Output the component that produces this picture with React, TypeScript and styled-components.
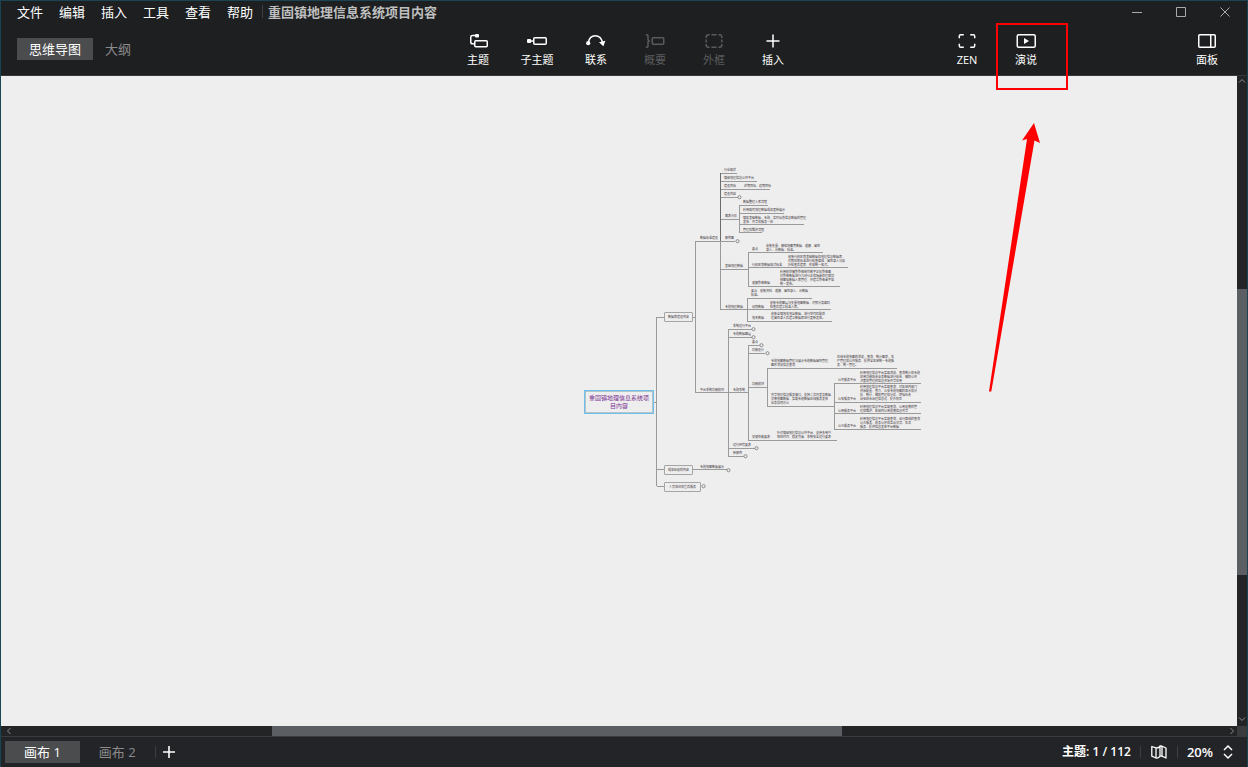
import React from "react";
import styled, { createGlobalStyle } from "styled-components";

const GlobalStyle = createGlobalStyle`
  *, *::before, *::after { box-sizing: border-box; }
  body { margin: 0; background: #1e1f21; }
  body, button {
    font-family: "Open Sans", "Noto Sans CJK SC", sans-serif;
    font-size: 13px;
    line-height: 20px;
  }
  button { margin: 0; padding: 0; border: 0; background: none; color: inherit; }
`;

const Window = styled.div`
  display: flex;
  flex-direction: column;
  height: 100vh;
  border: 1px solid #1b4452;
  border-bottom: 0;
  background: #1e1f21;
  color: #fff;
  overflow: hidden;
`;

const TitleBar = styled.header`
  display: flex;
  align-items: center;
  flex: none;
  height: 23px;
  padding: 0 0 2px 16px;
`;

const Menu = styled.nav`
  display: flex;
  gap: 16px;
`;

const MenuButton = styled.button`
  white-space: nowrap;
`;

const Divider = styled.span<{ $height: number }>`
  width: 1px;
  height: ${(p) => p.$height}px;
  background: #3d3e41;
`;

const TitleDivider = styled(Divider)`
  margin: 0 5px 0 9px;
`;

const DocumentTitle = styled.h1`
  margin: 0;
  font-size: 13px;
  font-weight: 700;
  color: #bfbfbf;
`;

const WindowControls = styled.div`
  display: flex;
  margin-left: auto;
`;

const WindowButton = styled.button`
  display: grid;
  place-items: center;
  width: 44px;
  height: 20px;
  color: #a9a9a9;
`;

const ToolBar = styled.div`
  display: grid;
  grid-template-columns: 1fr auto 1fr;
  flex: none;
  height: 52px;
  padding: 0 12px 0 16px;
  border-bottom: 1px solid #38383a;
`;

const ViewTabs = styled.div`
  display: flex;
  align-items: center;
  height: 50px;
`;

const Tab = styled.button<{ $active?: boolean; $pad: number }>`
  height: 22px;
  padding: 0 ${(p) => p.$pad}px;
  white-space: nowrap;
  color: ${(p) => (p.$active ? "#fff" : "#8b8b8b")};
  background: ${(p) => (p.$active ? "#4b4c4e" : "transparent")};
`;

const ToolGroup = styled.div<{ $end?: boolean }>`
  display: flex;
  justify-content: ${(p) => (p.$end ? "flex-end" : "center")};
`;

const ToolButton = styled.button<{ $width: number; $push?: number }>`
  display: flex;
  flex-direction: column;
  align-items: center;
  gap: 2px;
  width: ${(p) => p.$width}px;
  margin-left: ${(p) => p.$push ?? 0}px;
  padding: 8px ${(p) => p.$width % 2}px 0 0;
  font-size: 11px;
  line-height: 16px;
  color: #fff;
  &:disabled { color: #5a5b5d; }
`;

const Highlighted = styled.div`
  position: relative;
  &::after {
    content: "";
    position: absolute;
    top: -1px;
    left: 0;
    width: 72px;
    height: 67px;
    border: 2px solid #f00;
    z-index: 2;
    pointer-events: none;
  }
`;

const Workspace = styled.div`
  display: grid;
  grid-template-columns: 1fr 10px;
  grid-template-rows: 1fr 10px;
  flex: 1;
  min-height: 0;
`;

const Canvas = styled.main`
  position: relative;
  overflow: hidden;
  background: #eeeeee;
`;

const Wires = styled.svg`
  position: absolute;
  top: 0;
  left: 0;
`;

const Topic = styled.div`
  position: absolute;
  font-size: 3px;
  line-height: 4px;
  white-space: pre;
  color: #40353a;
`;

const BoxedTopic = styled(Topic)`
  display: grid;
  place-items: center;
  height: 10px;
  border: 1px solid #a5a5a5;
  border-radius: 1px;
`;

const CentralTopic = styled(Topic)`
  display: grid;
  place-items: center;
  width: 70px;
  height: 24px;
  border: 1px solid #6fc0e8;
  box-shadow: inset 0 0 0 1px #b3c4cc;
  font-size: 6px;
  line-height: 8px;
  text-align: center;
  color: #7b3292;
`;

const VerticalScroll = styled.div`
  display: grid;
  grid-template-rows: 12px 201fr 286fr 139fr 12px;
  justify-items: center;
  background: #232426;
  color: #8b8c8f;
`;

const HorizontalScroll = styled.div`
  display: grid;
  grid-template-columns: 13px 258fr 570fr 382fr 13px;
  align-items: center;
  justify-items: center;
  background: #232426;
  color: #8b8c8f;
`;

const Thumb = styled.div<{ $vertical?: boolean }>`
  width: 100%;
  height: 100%;
  background: #5b5e63;
  ${(p) => (p.$vertical ? "grid-row: 3;" : "grid-column: 3;")}
`;

const ScrollArrow = styled.button<{ $row?: number; $column?: number }>`
  display: grid;
  place-items: center;
  width: 10px;
  height: 10px;
  grid-row: ${(p) => p.$row ?? "auto"};
  grid-column: ${(p) => p.$column ?? "auto"};
`;

const Corner = styled.div`
  background: #3a3b3d;
`;

const StatusBar = styled.footer`
  display: flex;
  align-items: center;
  flex: none;
  height: 31px;
  padding: 0 14px 0 4px;
  border-top: 1px solid #3a3b3d;
  background: #232427;
`;

const AddSheet = styled.button`
  display: grid;
  place-items: center;
  width: 26px;
  height: 22px;
`;

const Status = styled.div`
  display: flex;
  align-items: center;
  gap: 9px;
  margin-left: auto;
  font-weight: 600;
`;

const TopicCount = styled.span`
  font-size: 12px;
`;

const StatusButton = styled.button`
  display: grid;
  place-items: center;
`;

const Zoom = styled.div`
  display: flex;
  align-items: center;
  gap: 10px;
`;

const Icon = ({ children, w = 20, h = 18 }: { children: React.ReactNode; w?: number; h?: number }) => (
  <svg width={w} height={h} viewBox={`0 0 ${w} ${h}`} fill="none" stroke="currentColor" strokeWidth="1.5" aria-hidden="true">
    {children}
  </svg>
);

const tools = [
  {
    label: "主题",
    icon: (
      <>
        <rect x="6.75" y="8.75" width="12.5" height="6" rx="1" />
        <path d="M9 3.5H4.5Q2.75 3.5 2.75 5.2V10Q2.75 11.8 4.5 11.8H6.5" />
        <rect x="7" y="2" width="4" height="3.5" rx="1" fill="currentColor" stroke="none" />
      </>
    ),
  },
  {
    label: "子主题",
    icon: (
      <>
        <rect x="6.75" y="5.75" width="12.5" height="6.5" rx="1" />
        <path d="M2 9H6.5" />
        <rect x="0" y="7" width="4.2" height="4" rx="1" fill="currentColor" stroke="none" />
      </>
    ),
  },
  {
    label: "联系",
    icon: (
      <>
        <path d="M2.3 10.5C3.2 6 6 3.8 9.3 3.8C13 3.8 15.5 6.5 16.6 10.5" />
        <circle cx="2.2" cy="11.2" r="2.1" fill="currentColor" stroke="none" />
        <path d="M13 10.2L19.4 8.8L17.4 14.2Z" fill="currentColor" stroke="none" />
      </>
    ),
  },
  {
    label: "概要",
    disabled: true,
    icon: (
      <>
        <path d="M0.8 2.8H1.8Q3 2.8 3 4V7.3Q3 9 4.8 9Q3 9 3 10.7V14Q3 15.2 1.8 15.2H.8" />
        <rect x="7.25" y="5.75" width="11.5" height="6.5" rx="1" />
      </>
    ),
  },
  {
    label: "外框",
    disabled: true,
    icon: (
      <path d="M2.2 6V5Q2.2 2.8 4.4 2.8H5.6M7.5 2.8H12.5M14.4 2.8H15.6Q17.8 2.8 17.8 5V6M17.8 7.5V10.5M17.8 12V13Q17.8 15.2 15.6 15.2H14.4M12.5 15.2H7.5M5.6 15.2H4.4Q2.2 15.2 2.2 13V12M2.2 10.5V7.5" />
    ),
  },
  { label: "插入", icon: <path d="M10 2.5V15.5M3.5 9H16.5" /> },
];

// Topics of the map: left, top, lines of text.
const topics: [number, number, string][] = [
  [724, 168, "行业现状"],
  [724, 176, "镇级地理信息公共平台"],
  [724, 184, "建设目标"],
  [744, 184, "近期目标、远期目标"],
  [724, 192, "建设内容"],
  [725, 214, "需求分析"],
  [743, 200, "数据整理入库流程"],
  [743, 208, "利用现有地理数据成果更新展示"],
  [743, 216, "镇区基础数据、专题、实时动态信息数据的管理\n发布、共享和服务一体"],
  [743, 228, "管理和维护流程"],
  [725, 236, "架构图"],
  [700, 236, "数据标准建设"],
  [725, 264, "基础地理数据"],
  [752, 247, "要点"],
  [766, 244, "收集矢量、栅格地图等数据、遥感、属性\n录入、元数据、标准。"],
  [752, 263, "行政区划数据格式标准"],
  [788, 255, "收集行政区划基础数据和地理信息数据库、\n对照国家标准进行检查编辑、属性录入与拓\n扑检查后建库、形成统一格式。"],
  [752, 281, "遥感影像数据"],
  [780, 270, "利用航空摄影影像制作数字正射影像图\n对影像数据进行几何纠正和镶嵌处理裁切\n按图幅数据入库管理、并建立影像金字塔\n统一发布。"],
  [725, 305, "专题地理数据"],
  [751, 289, "要点、收集资料、遥感、属性录入、元数据\n标准。"],
  [752, 305, "规划数据"],
  [770, 301, "收集专题图层与矢量地图数据、对照分类编码\n检查后建立标准入库。"],
  [752, 316, "地名数据"],
  [771, 312, "收集全镇地名地址数据、进行空间匹配处\n理属性录入后建立数据库进行更新发布。"],
  [733, 324, "系统运行平台"],
  [733, 332, "专题数据图层"],
  [752, 340, "要点"],
  [752, 348, "功能设计"],
  [752, 382, "功能模块"],
  [771, 359, "专题地图数据管理与展示专题数据属性管理\n图形浏览信息查询"],
  [837, 355, "在线专题地图的浏览、查询、统计图表、生\n产管理和公共服务、提供全区域统一专题服\n务、统一管理。"],
  [771, 393, "共享地理信息服务接口、支持二次开发及数据\n交换地图数据、实现专题数据在线服务发布\n业务协同办公"],
  [838, 378, "公共服务平台"],
  [860, 371, "利用地理信息平台实现浏览、查询统计和专题\n应用功能结合业务数据进行综合、辅助公共\n决策和管理的信息资源共享应用"],
  [838, 397, "公安服务平台"],
  [860, 385, "利用地理信息平台实现查询、对区域内部门\n资源配置、警力、公安专题地图的显示和分\n析、统计、辅助管理和分析、增强社会\n治安综合治理信息化、提升效率"],
  [838, 409, "公用服务平台"],
  [860, 405, "利用地理信息平台实现查询、公用设施的管\n理和维护、区域内公用设施信息共享"],
  [838, 424, "公众服务平台"],
  [860, 417, "利用地理信息平台实现查询、出行路线的查询\n公众服务、政务公开和互动交流、生活\n服务、提供信息发布平台数据"],
  [700, 388, "平台系统功能模块"],
  [733, 388, "专题系统"],
  [752, 435, "关键性能要求"],
  [777, 431, "针对镇级地理信息公共平台、支持多用户、\n响应时间、稳定可靠、系统安全运行要求"],
  [733, 443, "运行环境要求"],
  [733, 451, "新架构"],
  [700, 465, "专题地图数据展示"],
];

const boxes: [number, number, number, string][] = [
  [664, 312, 29, "数据库建设内容"],
  [664, 465, 29, "成果验收的内容"],
  [664, 482, 37, "人员培训和售后服务"],
];

// Horizontal rules under topics: x1, x2, y.
const rules = [
  [654, 657, 402], [657, 664, 317], [657, 664, 469], [657, 664, 486],
  [692, 695, 317], [695, 720, 241], [695, 748, 392],
  [720, 737, 173], [720, 757, 181], [720, 770, 189], [720, 738, 197], [720, 739, 219], [720, 735, 241],
  [739, 768, 205], [739, 784, 213], [739, 804, 224], [739, 762, 232],
  [720, 748, 269], [748, 823, 252], [748, 848, 267], [748, 840, 286],
  [720, 747, 309], [747, 812, 298], [747, 831, 309], [747, 832, 321],
  [729, 752, 329], [729, 752, 337], [748, 760, 345], [748, 765, 353], [748, 767, 387],
  [767, 897, 368], [767, 834, 406],
  [834, 921, 383], [834, 921, 402], [834, 921, 413], [834, 921, 429],
  [748, 837, 440], [729, 755, 448], [729, 744, 456],
  [692, 727, 469],
];

// Vertical trunks: x, y1, y2.
const trunks = [
  [656, 317, 486], [695, 241, 393], [720, 173, 310], [739, 205, 233], [748, 252, 287],
  [747, 298, 322], [728, 329, 457], [748, 345, 441], [767, 368, 407], [834, 383, 430],
];

const folds = [
  [739, 197], [737, 241], [753, 329], [753, 337], [761, 345], [767, 353],
  [756, 448], [745, 456], [728, 470], [703, 486],
];

// The canvas begins below the toolbar and inside the window frame.
const ORIGIN_X = 1;
const ORIGIN_Y = 76;

const MindMap = () => (
  <Canvas>
    <Wires width="1236" height="650" viewBox={`${ORIGIN_X} ${ORIGIN_Y} 1236 650`} aria-hidden="true">
      <g stroke="#9a9a9a" strokeWidth="1">
        {rules.map(([a, b, y]) => <line key={`${a}-${b}-${y}`} x1={a} x2={b} y1={y + 0.5} y2={y + 0.5} />)}
        {trunks.map(([x, a, b]) => <line key={`${x}-${a}`} x1={x + 0.5} x2={x + 0.5} y1={a} y2={b} />)}
      </g>
      <path d="M720.5 173V241" stroke="#6c6c6c" />
      <g stroke="#777" strokeWidth="0.8" fill="#eee">
        {folds.map(([x, y]) => <circle key={`${x}-${y}`} cx={x + 0.5} cy={y + 0.2} r="1.6" />)}
      </g>
      <path d="M1034 123L1040 143L1034.5 140.5L991.3 391.5H989L1027 139L1022 140.5Z" fill="#f00" />
    </Wires>
    <CentralTopic style={{ left: 584 - ORIGIN_X, top: 390 - ORIGIN_Y }}>{"重固镇地理信息系统项\n目内容"}</CentralTopic>
    {boxes.map(([x, y, width, text]) => (
      <BoxedTopic key={text} style={{ left: x - ORIGIN_X, top: y - ORIGIN_Y, width }}>{text}</BoxedTopic>
    ))}
    {topics.map(([x, y, text]) => (
      <Topic key={`${x}-${y}`} style={{ left: x - ORIGIN_X, top: y - ORIGIN_Y }}>{text}</Topic>
    ))}
  </Canvas>
);

export default function App() {
  return (
    <>
      <GlobalStyle />
      <Window>
        <TitleBar>
          <Menu>
            {["文件", "编辑", "插入", "工具", "查看", "帮助"].map((m) => <MenuButton key={m}>{m}</MenuButton>)}
          </Menu>
          <TitleDivider $height={13} />
          <DocumentTitle>重固镇地理信息系统项目内容</DocumentTitle>
          <WindowControls>
            <WindowButton aria-label="最小化">
              <svg width="10" height="10" stroke="currentColor"><path d="M0 5.5H10" /></svg>
            </WindowButton>
            <WindowButton aria-label="最大化">
              <svg width="10" height="10" stroke="currentColor" fill="none"><path d="M.5 .5H9.5V9.5H.5Z" /></svg>
            </WindowButton>
            <WindowButton aria-label="关闭">
              <svg width="10" height="10" stroke="currentColor"><path d="M.5 .5L9.5 9.5M9.5 .5L.5 9.5" /></svg>
            </WindowButton>
          </WindowControls>
        </TitleBar>

        <ToolBar>
          <ViewTabs>
            <Tab $active $pad={12}>思维导图</Tab>
            <Tab $pad={12}>大纲</Tab>
          </ViewTabs>
          <ToolGroup>
            {tools.map((t) => (
              <ToolButton key={t.label} $width={59} disabled={t.disabled}>
                <Icon>{t.icon}</Icon>
                {t.label}
              </ToolButton>
            ))}
          </ToolGroup>
          <ToolGroup $end>
            <ToolButton $width={58}>
              <Icon>
                <path d="M2.3 6.3V4Q2.3 2.7 3.8 2.7H6.8M13.2 2.7H16.2Q17.7 2.7 17.7 4V6.3M17.7 11.7V13.8Q17.7 15.3 16.2 15.3H13.2M6.8 15.3H3.8Q2.3 15.3 2.3 13.8V11.7" />
              </Icon>
              ZEN
            </ToolButton>
            <Highlighted>
              <ToolButton $width={61}>
                <Icon>
                  <rect x="1.25" y="2.75" width="18" height="12.5" rx="1.5" />
                  <path d="M8 6L13 9L8 12Z" fill="currentColor" stroke="none" />
                </Icon>
                演说
              </ToolButton>
            </Highlighted>
            <ToolButton $width={56} $push={122}>
              <Icon>
                <rect x="1.75" y="2.75" width="16.5" height="12.5" rx="1" />
                <path d="M13.75 3V15" />
              </Icon>
              面板
            </ToolButton>
          </ToolGroup>
        </ToolBar>

        <Workspace>
          <MindMap />
          <VerticalScroll>
            <ScrollArrow $row={1} aria-label="向上滚动">
              <svg width="8" height="8" fill="none" stroke="currentColor"><path d="M1 5.5L4 2.5L7 5.5" /></svg>
            </ScrollArrow>
            <Thumb $vertical />
            <ScrollArrow $row={5} aria-label="向下滚动">
              <svg width="8" height="8" fill="none" stroke="currentColor"><path d="M1 2.5L4 5.5L7 2.5" /></svg>
            </ScrollArrow>
          </VerticalScroll>
          <HorizontalScroll>
            <ScrollArrow $column={1} aria-label="向左滚动">
              <svg width="8" height="8" fill="none" stroke="currentColor"><path d="M6.5 1L3.5 4L6.5 7" /></svg>
            </ScrollArrow>
            <Thumb />
            <ScrollArrow $column={5} aria-label="向右滚动">
              <svg width="8" height="8" fill="none" stroke="currentColor"><path d="M3.5 1L6.5 4L3.5 7" /></svg>
            </ScrollArrow>
          </HorizontalScroll>
          <Corner />
        </Workspace>

        <StatusBar>
          <Tab $active $pad={19}>画布 1</Tab>
          <Tab $pad={19}>画布 2</Tab>
          <Divider $height={12} />
          <AddSheet aria-label="新建画布">
            <svg width="12" height="12" stroke="currentColor" strokeWidth="1.6"><path d="M6 0V12M0 6H12" /></svg>
          </AddSheet>
          <Status>
            <TopicCount>主题: 1 / 112</TopicCount>
            <Divider $height={12} />
            <StatusButton aria-label="导航图">
              <Icon w={18} h={16}>
                <path d="M1.8 2.5L6 3.8V14L1.8 12.2ZM6 3.8Q9.5 4 10 2V11.8Q9 14.5 6 14M10 2H11.5L16 4V14L12 12.2H10M12 2.3V12.2" strokeWidth="1.3" strokeLinejoin="round" />
              </Icon>
            </StatusButton>
            <Divider $height={12} />
            <Zoom>
              <span>20%</span>
              <StatusButton aria-label="缩放比例">
                <svg width="10" height="16" fill="none" stroke="currentColor" strokeWidth="1.5"><path d="M1 6L5 2L9 6M1 10L5 14L9 10" /></svg>
              </StatusButton>
            </Zoom>
          </Status>
        </StatusBar>
      </Window>
    </>
  );
}
